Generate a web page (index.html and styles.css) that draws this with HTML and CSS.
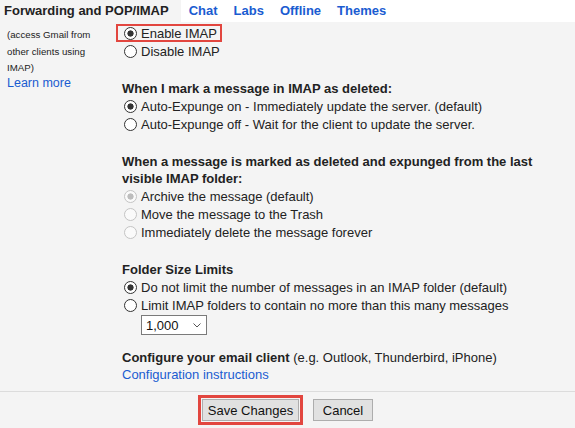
FILE: index.html
```html
<!DOCTYPE html>
<html>
<head>
<meta charset="utf-8">
<link rel="stylesheet" href="styles.css">
</head>
<body>
<div class="tabs">
  <div class="tab active">Forwarding and POP/IMAP</div>
  <a class="tab" href="#">Chat</a>
  <a class="tab" href="#">Labs</a>
  <a class="tab" href="#">Offline</a>
  <a class="tab" href="#">Themes</a>
</div>
<div class="main">
  <div class="side">
    <div class="note">(access Gmail from other clients using IMAP)</div>
    <a class="learn" href="#">Learn more</a>
  </div>
  <div class="content">
    <div class="opts">
      <label class="row"><span class="hl"><input type="radio" name="imap" checked><span>Enable IMAP</span></span></label>
      <label class="row"><input type="radio" name="imap"><span>Disable IMAP</span></label>
    </div>
    <div class="section">
      <div class="h">When I mark a message in IMAP as deleted:</div>
      <label class="row"><input type="radio" name="exp" checked><span>Auto-Expunge on - Immediately update the server. (default)</span></label>
      <label class="row"><input type="radio" name="exp"><span>Auto-Expunge off - Wait for the client to update the server.</span></label>
    </div>
    <div class="section">
      <div class="h">When a message is marked as deleted and expunged from the last visible IMAP folder:</div>
      <label class="row"><input type="radio" name="del" checked disabled><span>Archive the message (default)</span></label>
      <label class="row"><input type="radio" name="del" disabled><span>Move the message to the Trash</span></label>
      <label class="row"><input type="radio" name="del" disabled><span>Immediately delete the message forever</span></label>
    </div>
    <div class="section">
      <div class="h">Folder Size Limits</div>
      <label class="row"><input type="radio" name="lim" checked><span>Do not limit the number of messages in an IMAP folder (default)</span></label>
      <label class="row"><input type="radio" name="lim"><span>Limit IMAP folders to contain no more than this many messages</span></label>
      <div class="selrow">
        <div class="select"><span>1,000</span><svg width="8" height="5" viewBox="0 0 8 5"><path d="M0.5 0.5 L4 4 L7.5 0.5" fill="none" stroke="#555" stroke-width="1"/></svg></div>
      </div>
    </div>
    <div class="section last">
      <div class="h"><b>Configure your email client</b> (e.g. Outlook, Thunderbird, iPhone)</div>
      <a class="link" href="#">Configuration instructions</a>
    </div>
  </div>
</div>
<div class="footer">
  <button class="btn save">Save Changes</button>
  <button class="btn cancel">Cancel</button>
</div>
</body>
</html>
```
FILE: styles.css
```css
html, body {
  margin: 0;
  padding: 0;
}
body {
  font-family: "Liberation Sans", Arial, sans-serif;
  font-size: 13px;
  color: #222;
  background: #f4f4f4;
  height: 428px;
  overflow: hidden;
}
a {
  color: #1a5cd1;
  text-decoration: none;
}
.tabs {
  display: flex;
  height: 22px;
  line-height: 22px;
  background: #fff;
  font-weight: bold;
}
.tab {
  padding: 0 8px;
  white-space: nowrap;
}
.tab.active {
  background: #f4f4f4;
  color: #222;
  padding: 0 12px 0 4px;
}
.main {
  display: grid;
  grid-template-columns: 122px 1fr;
}
.side {
  padding: 5px 0 0 7px;
}
.note {
  font-size: 9.7px;
  line-height: 16.5px;
  width: 95px;
}
.learn {
  display: block;
  font-size: 12.5px;
  line-height: 12px;
}
.content {
  padding: 2px 10px 0 0;
}
.row {
  display: flex;
  align-items: center;
  height: 18px;
  white-space: nowrap;
}
.row input {
  appearance: none;
  -webkit-appearance: none;
  flex: none;
  width: 13px;
  height: 13px;
  margin: 0 4px 0 2px;
  border: 1px solid #333;
  border-radius: 50%;
  background: #fff;
  box-sizing: border-box;
}
.row input:checked {
  background: radial-gradient(circle, #333 0, #333 2.8px, #fff 3.4px);
}
.row input:disabled {
  border-color: #c4c4c4;
  background: #fafafa;
}
.row input:disabled:checked {
  background: radial-gradient(circle, #bdbdbd 0, #bdbdbd 2.8px, #fafafa 3.4px);
}
.hl {
  display: inline-flex;
  align-items: center;
  height: 14px;
  padding: 0 3px 0 4px;
  margin: 0 -3px 0 -4px;
  outline: 2px solid #e2463f;
}
.section {
  margin-top: 20px;
}
.section.last {
  margin-top: 14px;
}
.h {
  font-weight: bold;
  line-height: 17px;
}
.last .h {
  font-weight: normal;
}
.last .h b {
  font-weight: bold;
}
.link {
  display: block;
  line-height: 17px;
}
.selrow {
  padding: 1px 0 0 19px;
}
.select {
  display: flex;
  align-items: center;
  justify-content: space-between;
  box-sizing: border-box;
  width: 66px;
  height: 20px;
  padding: 0 5px 0 4px;
  border: 1px solid #7a7a7a;
  background: #fff;
  color: #111;
}
.footer {
  margin-top: 8px;
  border-top: 1px solid #dcdcdc;
  padding-top: 7px;
  display: flex;
  justify-content: center;
}
.btn {
  font-family: "Liberation Sans", Arial, sans-serif;
  font-size: 13px;
  color: #111;
  height: 22px;
  padding: 0;
  background: #e1e1e1;
  border: 1px solid #adadad;
  box-sizing: border-box;
}
.save {
  width: 97px;
  margin-right: 14px;
  outline: 3px solid #e2463f;
  outline-offset: 1px;
}
.cancel {
  width: 60px;
}
```
